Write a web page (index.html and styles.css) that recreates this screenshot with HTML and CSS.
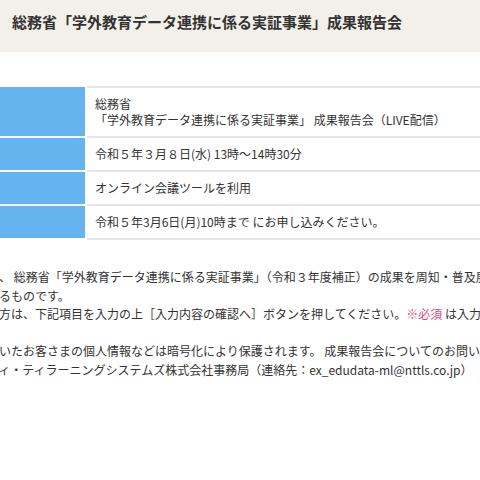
FILE: index.html
```html
<!DOCTYPE html>
<html lang="ja">
  <head>
    <meta charset="utf-8">
    <title>成果報告会</title>
    <link rel="stylesheet" href="styles.css">
  </head>
  <body>
    <div class="page-head">
      <h1>総務省「学外教育データ連携に係る実証事業」成果報告会</h1>
    </div>

    <div class="content">
      <table class="info">
        <tr>
          <th></th>
          <td>総務省<br>「学外教育データ連携に係る実証事業」 成果報告会（LIVE配信）</td>
        </tr>
        <tr>
          <th></th>
          <td>令和５年３月８日(水) 13時〜14時30分</td>
        </tr>
        <tr>
          <th></th>
          <td>オンライン会議ツールを利用</td>
        </tr>
        <tr>
          <th></th>
          <td>令和５年3月6日(月)10時まで にお申し込みください。</td>
        </tr>
      </table>

      <div class="lead">
        <p>
          本成果報告会は、 総務省「学外教育データ連携に係る実証事業」（令和３年度補正）の成果を周知・普及展開すること<br>
          を目的に開催するものです。<br>
          ご参加を希望の方は、下記項目を入力の上［入力内容の確認へ］ボタンを押してください。<span class="req">※必須</span> は入力必須項目です。
        </p>
        <p>
          お申込みいただいたお客さまの個人情報などは暗号化により保護されます。 成果報告会についてのお問い合わ<br>
          せは、エヌ・ティ・ティラーニングシステムズ株式会社事務局（連絡先：ex_edudata-ml@nttls.co.jp）
        </p>
      </div>
    </div>
  </body>
</html>
```

FILE: styles.css
```css
html,
body {
  margin: 0;
  overflow: hidden;
}
body {
  font-family: "Noto Sans CJK JP", "Noto Sans", sans-serif;
  color: #333;
  background: #fff;
}
.page-head {
  background-color: #f3f0e9;
  height: 52px;
  box-sizing: border-box;
  padding: 12px 12px 0;
}
.page-head h1 {
  margin: 0;
  font-size: 15px;
  line-height: 20px;
  font-weight: bold;
  color: #333;
  white-space: nowrap;
}

/* the page below the title is wider than the window, the left edge is cut */
.content {
  margin-left: -85px;
  width: 700px;
}

.info {
  margin-top: 34px;
  width: 100%;
  border-collapse: collapse;
  font-size: 12px;
  line-height: 16px;
}
.info th {
  width: 154px;
  background-color: #65b4f0;
  padding: 8px;
  border-bottom: 2px solid #fff;
  border-right: 2px solid #fff;
}
.info td {
  padding: 8px;
  border-bottom: 2px solid #e6e6e6;
  white-space: nowrap;
}
.info tr:first-child td {
  border-top: 2px solid #e6e6e6;
}

.lead {
  margin-top: 28px;
  font-size: 12px;
  line-height: 18.5px;
}
.lead p {
  margin: 0 0 18.5px;
  white-space: nowrap;
}
.req {
  color: #d5507e;
}
```
